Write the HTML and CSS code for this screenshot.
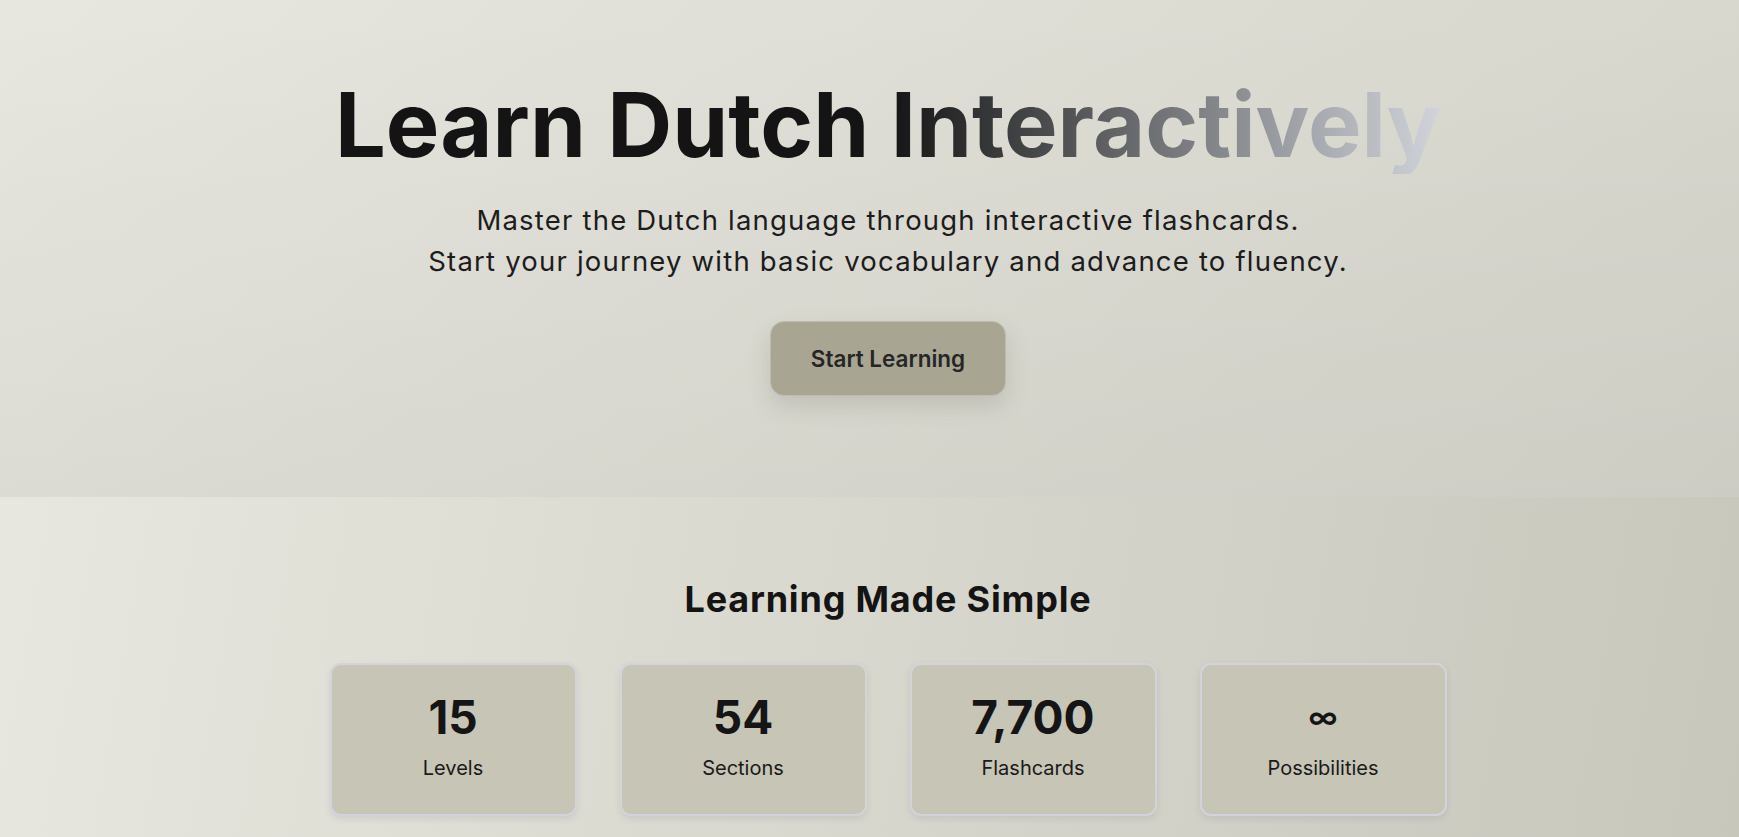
FILE: index.html
```html
<!DOCTYPE html>
<html lang="en">

<head>
    <meta charset="UTF-8">
    <title>Learn Dutch</title>
    <link rel="stylesheet" href="styles.css">
</head>

<body>
    <!--hero-->
    <section class="hero">
        <div class="inner">
            <h1 class="title">Learn Dutch Interactively</h1>
            <p class="lead">Master the Dutch language through interactive flashcards.<br>
                Start your journey with basic vocabulary and advance to fluency.</p>
            <button class="start">Start Learning</button>
        </div>
    </section>
    <!--hero end-->
    <!--features-->
    <section class="features">
        <div class="inner">
            <h2 class="heading">Learning Made Simple</h2>
            <div class="stats">
                <div class="stat">
                    <div class="num">15</div>
                    <div class="label">Levels</div>
                </div>
                <div class="stat">
                    <div class="num">54</div>
                    <div class="label">Sections</div>
                </div>
                <div class="stat">
                    <div class="num">7,700</div>
                    <div class="label">Flashcards</div>
                </div>
                <div class="stat">
                    <div class="num inf">∞</div>
                    <div class="label">Possibilities</div>
                </div>
            </div>
        </div>
    </section>
    <!--features end-->
</body>

</html>
```

FILE: styles.css
```css
* {
    box-sizing: border-box;
}

html,
body {
    margin: 0;
    padding: 0;
    font-family: Inter, "Noto Sans", sans-serif;
    color: #141414;
}

.inner {
    padding-left: 37px;
    display: flex;
    flex-direction: column;
    align-items: center;
    text-align: center;
}

/*hero*/
.hero {
    height: 497px;
    padding-top: 75px;
    background: linear-gradient(to bottom, rgba(0, 0, 0, 0), rgba(0, 0, 0, 0.03)),
        linear-gradient(135deg, #e7e7df 0%, #d4d3ca 100%);
}

.title {
    display: inline-block;
    margin: 0;
    font-size: 90px;
    font-weight: 700;
    line-height: 99px;
    background: linear-gradient(to right, #141414 50%, #d1d5db 100%);
    -webkit-background-clip: text;
    background-clip: text;
    color: transparent;
}

.lead {
    margin: 26px 0 0;
    font-size: 27.5px;
    line-height: 41px;
    letter-spacing: 1.2px;
    color: #1c1c1c;
}

.start {
    margin-top: 39px;
    padding: 22px 40px;
    font-family: inherit;
    font-size: 22.5px;
    font-weight: 600;
    line-height: 29px;
    color: #262626;
    background: #a8a592;
    border: 1px solid #bdbcb4;
    border-radius: 14px;
    box-shadow: 0 10px 22px rgba(90, 88, 70, 0.18);
    cursor: pointer;
}

/*features*/
.features {
    min-height: 340px;
    padding: 81px 0 60px;
    background: linear-gradient(100deg, #e8e7df 0%, #c8c7bc 100%);
}

.heading {
    margin: 0;
    font-size: 36px;
    font-weight: 700;
    line-height: 1.2;
    letter-spacing: 0.8px;
}

.stats {
    display: grid;
    grid-template-columns: repeat(4, 247px);
    gap: 43px;
    margin-top: 42px;
}

.stat {
    padding: 24px 16px 31px;
    background: #c7c5b6;
    border: 2px solid #d3d3da;
    border-radius: 11px;
    box-shadow: 0 3px 6px rgba(120, 120, 140, 0.18);
}

.num {
    font-size: 46px;
    font-weight: 700;
    line-height: 57.6px;
    color: #151515;
}

.num.inf {
    font-size: 30px;
    font-weight: 600;
}

.label {
    margin-top: 6px;
    font-size: 20px;
    line-height: 30px;
    color: #1a1a1a;
}
```
